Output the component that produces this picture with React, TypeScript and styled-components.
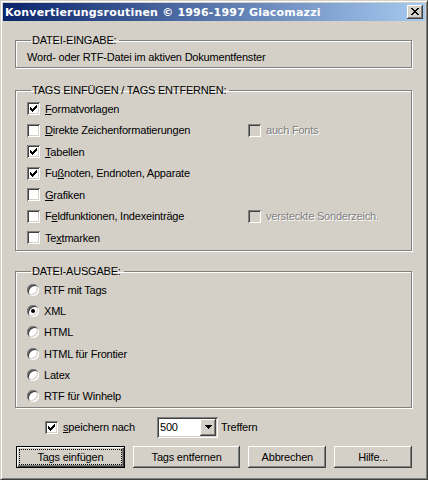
import React from 'react';
import styled, { createGlobalStyle, css } from 'styled-components';

const GlobalStyle = createGlobalStyle`
  html, body {
    margin: 0;
    padding: 0;
    background: #d4d0c8;
  }
  * {
    box-sizing: border-box;
  }
`;

const Window = styled.div`
  width: 428px;
  height: 480px;
  display: flex;
  flex-direction: column;
  padding: 2px;
  background: #d4d0c8;
  border: 1px solid;
  border-color: #d4d0c8 #404040 #404040 #d4d0c8;
  box-shadow: inset 1px 1px 0 #ffffff, inset -1px -1px 0 #808080;
  font-family: 'Liberation Sans', Arial, sans-serif;
  font-size: 11px;
  letter-spacing: -0.2px;
  color: #000000;
`;

const TitleBar = styled.div`
  height: 18px;
  display: flex;
  align-items: center;
  justify-content: space-between;
  padding: 0 2px 0 2px;
  background: linear-gradient(to right, #0a246a, #a6caf0);
`;

const TitleText = styled.div`
  font-family: 'DejaVu Sans', Verdana, sans-serif;
  font-weight: bold;
  font-size: 11px;
  letter-spacing: 0.2px;
  color: #ffffff;
  white-space: nowrap;
`;

const bevel = css`
  background: #d4d0c8;
  box-shadow: inset -1px -1px 0 #404040, inset 1px 1px 0 #ffffff,
    inset -2px -2px 0 #808080, inset 2px 2px 0 #d4d0c8;
`;

const sunken = css`
  box-shadow: inset 1px 1px 0 #808080, inset -1px -1px 0 #ffffff,
    inset 2px 2px 0 #404040, inset -2px -2px 0 #d4d0c8;
`;

const CloseButton = styled.div`
  ${bevel};
  width: 16px;
  height: 14px;
  display: flex;
  align-items: center;
  justify-content: center;
  padding-bottom: 1px;
`;

const Content = styled.div`
  flex: 1;
  display: flex;
  flex-direction: column;
  padding: 0 13px 0 12px;
`;

const Group = styled.fieldset<{ $top: number; $bottom?: number }>`
  margin: ${(p) => p.$top}px 0 0 0;
  padding: 0 0 ${(p) => p.$bottom ?? 0}px 11px;
  min-width: 0;
  border: 1px solid #808080;
  box-shadow: 1px 1px 0 #ffffff, inset 1px 1px 0 #ffffff;
`;

const Legend = styled.legend`
  margin-left: 4px;
  padding: 0 3px 0 1px;
  line-height: 15px;
  height: 15px;
`;

const InputText = styled.div`
  padding-top: 2px;
  line-height: 14px;
`;

const OptionGrid = styled.div<{ $row: number }>`
  display: grid;
  grid-template-columns: 221px 1fr;
  grid-auto-rows: ${(p) => p.$row}px;
`;

const Option = styled.label`
  display: flex;
  align-items: center;
  gap: 5px;
  white-space: nowrap;
`;

const OptionText = styled.span<{ $disabled?: boolean }>`
  line-height: 14px;
  ${(p) =>
    p.$disabled &&
    css`
      color: #808080;
      text-shadow: 1px 1px 0 #ffffff;
    `}
`;

const Mnemonic = styled.span`
  text-decoration: underline;
  text-underline-offset: 1px;
`;

const CheckBox = styled.span<{ $disabled?: boolean }>`
  ${sunken};
  width: 13px;
  height: 13px;
  flex: none;
  display: flex;
  padding: 3px;
  background-color: ${(p) => (p.$disabled ? '#d4d0c8' : '#ffffff')};
`;

const Radio = styled.span`
  width: 12px;
  height: 12px;
  flex: none;
  display: flex;
  align-items: center;
  justify-content: center;
  border-radius: 50%;
  background: #ffffff;
  box-shadow: inset 1px 1px 0 #808080, inset -1px -1px 0 #ffffff,
    inset 2px 2px 0 #404040, inset -2px -2px 0 #d4d0c8;
`;

const RadioDot = styled.span`
  width: 4px;
  height: 4px;
  border-radius: 50%;
  background: #000000;
`;

const SaveRow = styled.div`
  height: 21px;
  margin-top: 9px;
  display: flex;
  align-items: center;
  padding-left: 30px;
`;

const SaveLabel = styled(Option)`
  width: 112px;
`;

const Combo = styled.div`
  ${sunken};
  width: 61px;
  height: 21px;
  display: flex;
  align-items: stretch;
  padding: 2px;
  background: #ffffff;
`;

const ComboValue = styled.div`
  flex: 1;
  padding-left: 1px;
  line-height: 17px;
`;

const ComboArrow = styled.div`
  ${bevel};
  width: 16px;
  display: flex;
  align-items: center;
  justify-content: center;
`;

const Hits = styled.span`
  margin-left: 3px;
`;

const ButtonRow = styled.div`
  margin-top: 8px;
  padding-left: 1px;
  display: flex;
  gap: 8px;
`;

const Button = styled.button<{ $width: number; $default?: boolean }>`
  width: ${(p) => p.$width}px;
  height: 22px;
  padding: 0;
  display: flex;
  align-items: stretch;
  font: inherit;
  letter-spacing: inherit;
  color: #000000;
  background: #d4d0c8;
  ${(p) =>
    p.$default
      ? css`
          border: 1px solid #000000;
          box-shadow: inset 1px 1px 0 #ffffff, inset -1px -1px 0 #404040,
            inset -2px -2px 0 #808080;
        `
      : css`
          border: none;
          ${bevel};
        `}
`;

const ButtonLabel = styled.span<{ $focus?: boolean }>`
  flex: 1;
  display: flex;
  align-items: center;
  justify-content: center;
  margin: ${(p) => (p.$focus ? '2px' : '0')};
  border: ${(p) => (p.$focus ? '1px dotted #000000' : 'none')};
`;

const CheckMark = () => (
  <svg width="7" height="7" viewBox="0 0 7 7" shapeRendering="crispEdges">
    <path
      fill="#000"
      d="M0 2h1v3H0z M1 3h1v3H1z M2 4h1v3H2z M3 3h1v3H3z M4 2h1v3H4z M5 1h1v3H5z M6 0h1v3H6z"
    />
  </svg>
);

const CloseGlyph = () => (
  <svg width="8" height="7" viewBox="0 0 8 7" shapeRendering="crispEdges">
    <path
      fill="#000"
      d="M0 0h2v1H0z M6 0h2v1H6z M1 1h2v1H1z M5 1h2v1H5z M2 2h4v1H2z M3 3h2v1H3z M2 4h4v1H2z M1 5h2v1H1z M5 5h2v1H5z M0 6h2v1H0z M6 6h2v1H6z"
    />
  </svg>
);

const DownArrow = () => (
  <svg width="7" height="4" viewBox="0 0 7 4" shapeRendering="crispEdges">
    <path fill="#000" d="M0 0h7v1H0z M1 1h5v1H1z M2 2h3v1H2z M3 3h1v1H3z" />
  </svg>
);

type Label = { before?: string; key?: string; after: string };

type TagOption = { label: Label; checked: boolean; side?: string };

const tagOptions: TagOption[] = [
  { label: { key: 'F', after: 'ormatvorlagen' }, checked: true },
  { label: { key: 'D', after: 'irekte Zeichenformatierungen' }, checked: false, side: 'auch Fonts' },
  { label: { key: 'T', after: 'abellen' }, checked: true },
  { label: { before: 'Fu', key: 'ß', after: 'noten, Endnoten, Apparate' }, checked: true },
  { label: { key: 'G', after: 'rafiken' }, checked: false },
  { label: { before: 'F', key: 'e', after: 'ldfunktionen, Indexeinträge' }, checked: false, side: 'versteckte Sonderzeich.' },
  { label: { before: 'Te', key: 'x', after: 'tmarken' }, checked: false },
];

const outputs = ['RTF mit Tags', 'XML', 'HTML', 'HTML für Frontier', 'Latex', 'RTF für Winhelp'];

const LabelText = ({ label }: { label: Label }) => (
  <OptionText>
    {label.before}
    {label.key && <Mnemonic>{label.key}</Mnemonic>}
    {label.after}
  </OptionText>
);

const App = () => {
  return (
    <>
      <GlobalStyle />
      <Window>
        <TitleBar>
          <TitleText>Konvertierungsroutinen © 1996-1997 Giacomazzi</TitleText>
          <CloseButton>
            <CloseGlyph />
          </CloseButton>
        </TitleBar>
        <Content>
          <Group $top={12} $bottom={3}>
            <Legend>DATEI-EINGABE:</Legend>
            <InputText>Word- oder RTF-Datei im aktiven Dokumentfenster</InputText>
          </Group>

          <Group $top={15} $bottom={1.5}>
            <Legend>TAGS EINFÜGEN / TAGS ENTFERNEN:</Legend>
            <OptionGrid $row={21.5}>
              {tagOptions.map((o, i) => (
                <React.Fragment key={i}>
                  <Option>
                    <CheckBox>{o.checked && <CheckMark />}</CheckBox>
                    <LabelText label={o.label} />
                  </Option>
                  <Option>
                    {o.side && (
                      <>
                        <CheckBox $disabled />
                        <OptionText $disabled>{o.side}</OptionText>
                      </>
                    )}
                  </Option>
                </React.Fragment>
              ))}
            </OptionGrid>
          </Group>

          <Group $top={13}>
            <Legend>DATEI-AUSGABE:</Legend>
            <OptionGrid $row={21.33}>
              {outputs.map((o) => (
                <React.Fragment key={o}>
                  <Option>
                    <Radio>{o === 'XML' && <RadioDot />}</Radio>
                    <OptionText>{o}</OptionText>
                  </Option>
                  <span />
                </React.Fragment>
              ))}
            </OptionGrid>
          </Group>

          <SaveRow>
            <SaveLabel>
              <CheckBox>
                <CheckMark />
              </CheckBox>
              <LabelText label={{ key: 's', after: 'peichern nach' }} />
            </SaveLabel>
            <Combo>
              <ComboValue>500</ComboValue>
              <ComboArrow>
                <DownArrow />
              </ComboArrow>
            </Combo>
            <Hits>Treffern</Hits>
          </SaveRow>

          <ButtonRow>
            <Button $width={109} $default>
              <ButtonLabel $focus>Tags einfügen</ButtonLabel>
            </Button>
            <Button $width={108}>
              <ButtonLabel>Tags entfernen</ButtonLabel>
            </Button>
            <Button $width={78}>
              <ButtonLabel>Abbrechen</ButtonLabel>
            </Button>
            <Button $width={78}>
              <ButtonLabel>Hilfe...</ButtonLabel>
            </Button>
          </ButtonRow>
        </Content>
      </Window>
    </>
  );
};

export default App;
